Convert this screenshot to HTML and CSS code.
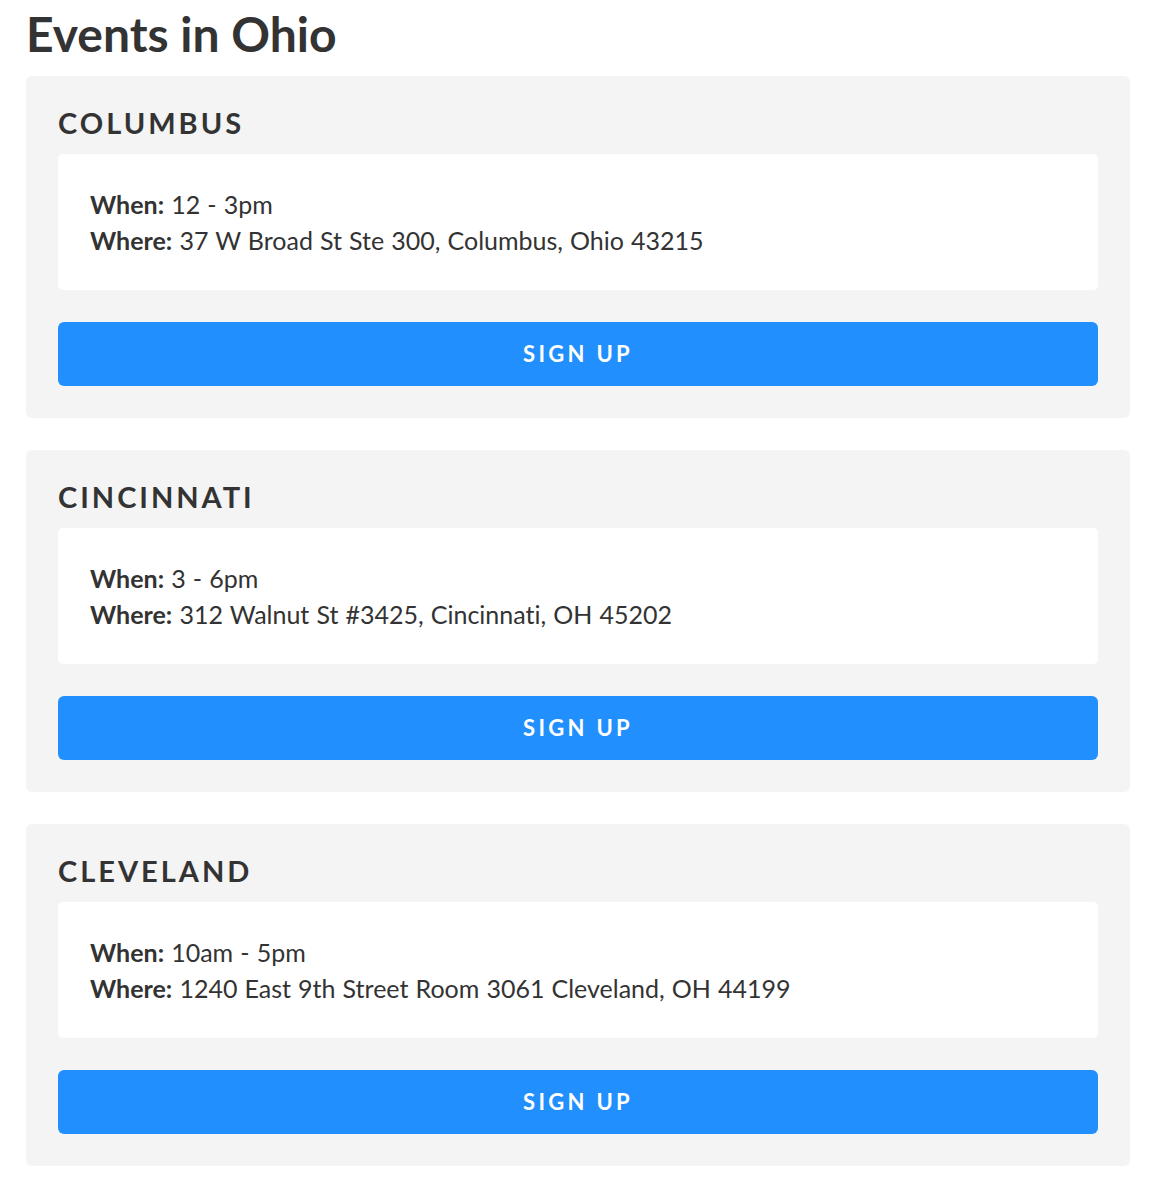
FILE: index.html
```html
<!DOCTYPE html>
<html lang="en">
<head>
  <meta charset="UTF-8" />
  <title>Events in Ohio</title>
  <link rel="stylesheet" href="styles.css">
</head>
<body>

  <h1 class="page-title">Events in Ohio</h1>

  <!-- event list -->
  <div class="events">
    <div class="event">
      <h2 class="city">Columbus</h2>
      <div class="details">
        <p><strong>When:</strong> 12 - 3pm</p>
        <p><strong>Where:</strong> 37 W Broad St Ste 300, Columbus, Ohio 43215</p>
      </div>
      <button class="signup">Sign up</button>
    </div>

    <div class="event">
      <h2 class="city">Cincinnati</h2>
      <div class="details">
        <p><strong>When:</strong> 3 - 6pm</p>
        <p><strong>Where:</strong> 312 Walnut St #3425, Cincinnati, OH 45202</p>
      </div>
      <button class="signup">Sign up</button>
    </div>

    <div class="event">
      <h2 class="city">Cleveland</h2>
      <div class="details">
        <p><strong>When:</strong> 10am - 5pm</p>
        <p><strong>Where:</strong> 1240 East 9th Street Room 3061 Cleveland, OH 44199</p>
      </div>
      <button class="signup">Sign up</button>
    </div>
  </div>

</body>
</html>
```

FILE: styles.css
```css
body {
  margin: 0;
  padding: 5px 26px 24px;
  font-family: Lato, "Open Sans", sans-serif;
  font-variant-ligatures: none;
  color: #333;
  background: #fff;
}

.page-title {
  margin: 0 0 13px;
  font-size: 48px;
  line-height: 58px;
  font-weight: bold;
}

.events {
  display: flex;
  flex-direction: column;
  gap: 32px;
}

.event {
  background: #f4f4f4;
  border-radius: 6px;
  padding: 32px;
  display: flex;
  flex-direction: column;
}

.city {
  margin: 0 0 16px;
  font-size: 29px;
  line-height: 30px;
  font-weight: bold;
  text-transform: uppercase;
  letter-spacing: 3px;
}

.details {
  background: #fff;
  border-radius: 5px;
  padding: 32px;
  font-size: 25px;
  line-height: 36px;
  word-spacing: 0.7px;
}

.details p {
  margin: 0;
}

.signup {
  margin-top: 32px;
  height: 64px;
  padding-bottom: 2px;
  border: none;
  border-radius: 6px;
  background: #228fff;
  color: #fff;
  font-family: inherit;
  font-size: 22px;
  font-weight: bold;
  text-transform: uppercase;
  letter-spacing: 3.3px;
  cursor: pointer;
}

.signup:hover {
  background: #1a7ee6;
}
```
